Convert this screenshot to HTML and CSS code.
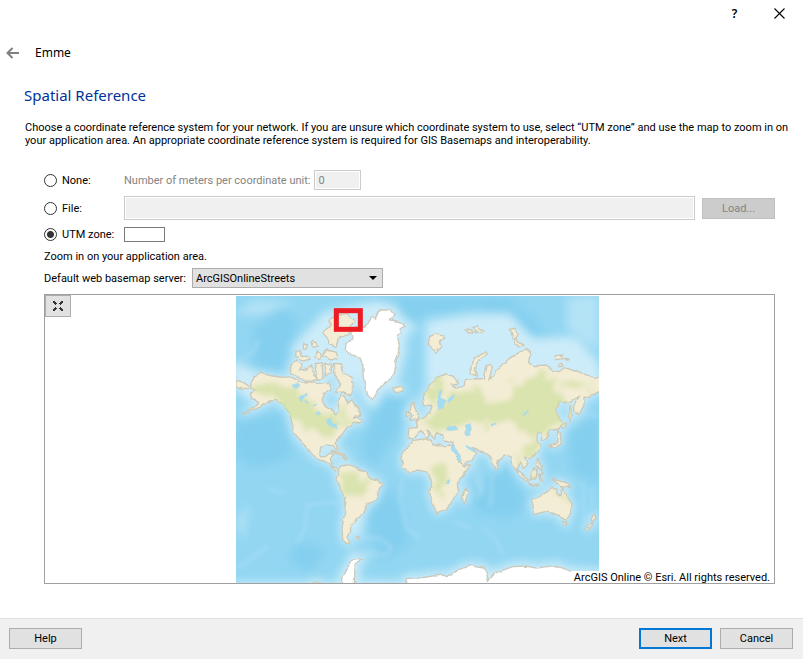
FILE: index.html
```html
<!DOCTYPE html>
<html lang="en">
<head>
<meta charset="utf-8">
<title>Emme - Spatial Reference</title>
<link rel="stylesheet" href="styles.css">
</head>
<body>
<header class="titlebar">
  <button class="tool" type="button" aria-label="What's this">?</button>
  <button class="tool" type="button" aria-label="Close"><svg width="11" height="11" viewBox="0 0 11 11"><path d="M.5.5l10 10M10.5.5l-10 10" stroke="#000" stroke-width="1.1" fill="none"/></svg></button>
</header>
<nav class="crumb">
  <button class="back" type="button" aria-label="Back"><svg width="14" height="12" viewBox="0 0 14 12"><path d="M13 6H2M6.500 1L1.500 6l5 5" fill="none" stroke="#808080" stroke-width="2"/></svg></button>
  <span>Emme</span>
</nav>
<main class="page">
  <h1>Spatial Reference</h1>
  <p class="intro">Choose a coordinate reference system for your network. If you are unsure which coordinate system to use, select “UTM zone” and use the map to zoom in on your application area. An appropriate coordinate reference system is required for GIS Basemaps and interoperability.</p>
  <form class="form">
    <div class="row row-none">
      <label class="choice"><input type="radio" name="crs">None:</label>
      <label class="muted" for="meters">Number of meters per coordinate unit:</label>
      <input class="field off meters" id="meters" type="text" value="0" disabled>
    </div>
    <div class="row row-file">
      <label class="choice"><input type="radio" name="crs">File:</label>
      <input class="field off file" type="text" aria-label="File" disabled>
      <button class="btn" type="button" disabled>Load...</button>
    </div>
    <div class="row row-utm">
      <label class="choice"><input type="radio" name="crs" checked>UTM zone:</label>
      <input class="field zone" type="text" aria-label="UTM zone">
    </div>
    <p class="hint">Zoom in on your application area.</p>
    <div class="row row-server">
      <label for="server">Default web basemap server:</label>
      <div class="picker">
        <select id="server"><option>ArcGISOnlineStreets</option></select>
        <svg class="arrow" width="8" height="4" viewBox="0 0 8 4"><path d="M0 0h8L4 4z"/></svg>
      </div>
    </div>
    <div class="map">
      <svg class="world" width="363" height="287" viewBox="0 3 1089 861" role="img" aria-label="World map">
        <defs>
          <filter id="soft" x="-20%" y="-20%" width="140%" height="140%"><feGaussianBlur stdDeviation="14"/></filter>
          <filter id="haze" x="-20%" y="-20%" width="140%" height="140%"><feGaussianBlur stdDeviation="6"/></filter>
          <filter id="growth" x="-20%" y="-20%" width="140%" height="140%"><feTurbulence type="fractalNoise" baseFrequency=".03" numOctaves="3" seed="9"/><feDisplacementMap in="SourceGraphic" scale="70" xChannelSelector="R" yChannelSelector="G"/><feGaussianBlur stdDeviation="8"/></filter>
          <filter id="coast" x="-5%" y="-5%" width="110%" height="110%"><feTurbulence type="fractalNoise" baseFrequency=".045" numOctaves="2" seed="4"/><feDisplacementMap in="SourceGraphic" scale="12" xChannelSelector="R" yChannelSelector="G"/><feGaussianBlur stdDeviation="1.500"/></filter>
          <g id="land">
            <path d="M45 265L55 242 75 235 110 243 140 247 165 245 190 262 215 260 245 266 275 262 285 285 266 295 258 315 266 332 285 340 298 357 307 352 308 330 312 300 325 304 335 325 345 317 360 335 375 355 372 365 352 368 380 376 370 387 352 382 335 395 320 415 304 435 297 446 307 464 298 462 290 452 270 450 254 460 250 476 258 486 270 484 280 475 292 478 283 492 290 512 308 522 297 526 280 507 262 497 240 490 225 473 210 455 195 440 185 430 172 405 168 380 160 352 140 330 120 316 100 318 75 335 40 350 15 360 60 333 68 325 48 313 43 295 60 285 44 280Z"/>
            <path d="M308 519L324 508 350 512 365 525 385 530 400 548 425 555 438 568 430 590 418 615 395 627 385 650 370 667 358 678 346 690 343 710 335 730 342 744 330 745 320 730 318 700 325 660 330 610 315 585 302 560 307 540Z"/>
            <path d="M515 452L530 437 560 432 584 432 590 446 618 453 645 450 655 470 668 495 682 513 703 510 682 540 664 565 667 590 650 607 645 625 625 645 602 654 590 625 581 592 587 562 574 532 546 525 520 532 500 515 495 488Z"/>
            <path d="M519 400L544 397 540 378 560 365 582 352 588 330 565 332 562 305 580 275 602 247 630 237 655 245 668 257 664 270 648 267 662 282 685 272 686 257 725 252 745 250 753 212 765 207 765 232 759 253 778 237 786 220 805 205 820 190 850 172 870 160 885 180 880 205 895 212 932 210 945 226 970 230 985 218 1010 225 1040 235 1060 245 1100 248 1100 284 1070 300 1060 308 1044 306 1044 330 1030 362 1017 350 1015 330 1030 305 1000 320 970 322 958 345 968 366 980 385 965 402 940 405 932 430 920 435 920 414 905 412 902 435 912 452 905 475 885 488 866 486 874 510 863 520 850 505 844 520 860 545 853 542 833 515 825 485 808 480 787 497 783 520 776 522 764 485 746 472 722 465 700 458 722 474 710 492 680 510 670 496 655 464 650 442 620 434 620 419 600 414 596 432 584 418 572 404 580 423 570 430 556 407 541 420 530 432 516 430Z"/>
            <path d="M888 615L920 600 935 588 950 580 962 583 963 596 975 602 980 578 993 606 1008 625 1005 655 994 672 975 668 955 655 925 650 895 658Z M982 680l12 0-5 12z"/>
            <path d="M680 605L690 580 696 592 688 620 680 622Z M1073 655l10 14-12 15-6-8z M1064 684l6 6-17 15-5-5z"/>
            <path d="M845 524l15 10 23 30-12-3-20-23z M882 535l15-17 8 6-6 28-15 0z M880 565l28 3-2 5-26-4z M908 538l15-5-11 9 8 17-9-5z M948 553l20 4 25 8 14 14-19-7-14 4-10-12z M905 490l7 16 6 22-8-4-9-16z"/>
            <path d="M965 405l8 15 3 25-18 10-20-1 25-12z M1002 330l6 28-5 26-3-25z M975 390l16-6-2 8-12 7z"/>
            <path d="M527 325l9-6-2 17 12 25-3 11-20 4 8-15-9-12z M512 350l9-4 0 15-10 4z M472 280l15-6 15 3 0 10-17 6-10-3z"/>
            <path d="M578 125l20-10 25 5 3 10-14 6 6 17-16 10-3 12-15-18z M690 105l14-1 7 8-14 2z M711 99l11-9 5 12 14 0-3 9-16 5z M823 103l14-4 7 19-9 12 15 9 14 12-17 4-16-24z M706 236l-1-25 15-24 31-17 4 9-28 19-12 25 8 21z M958 182l22-2 4 11-25 3z M987 188l13 4-4 4z M965 208l12-3 4 8-12 2z"/>
            <path d="M166 205l15-8 14 10-2 18 18-3 16-12 5 30 15 12-25 7-34-10-25-20z M180 169l14-2 4 17 20 0 4 9-20 5-23-12z M203 144l11 2-3 14-9-2z M226 140l13 2 7 12-17 3z M245 170l-8 16 15 5 6-15z M261 110l25-20-8-16 31-16 27-2 20 20-14 22-5 20-29 10-8 26-23-5 2-19-17-13z M270 165l30 6 6 17-20 7-26-11z M240 206l18-3 3 43-18 9-5-25z M268 205l18 6-1 22-17 10z M292 209l21 0 9 25 26 10 4 28-12 30-17-11-25 1 16-25-20-25z"/>
            <path d="M286 466l22 6 20 7-3 4-38-12z M319 487l14 1-3 6z M362 725l8 1-2 6z"/>
            <path d="M0 257l18 2 22 15-5 9-17 0-18-7z"/>
          </g>
          <path id="greenland" d="M382 97L400 82 408 65 418 70 430 45 463 45 475 60 462 75 482 78 508 95 492 102 496 115 482 120 488 140 491 170 480 200 475 235 460 255 440 270 425 285 415 305 408 315 395 300 386 270 381 240 381 210 370 185 345 180 328 165 330 145 350 135 344 112 360 95Z"/>
          <path id="ice" d="M-5 890V874H220L230 864 250 864 262 874H316L318 845 337 817 350 793 375 790 357 812 355 870H510L515 850 546 850 590 843 645 840 668 824 705 812 746 820 758 857 777 834 830 815 870 813 900 819 960 812 1005 829 1100 835V890Z"/>
          <mask id="landmask" maskUnits="userSpaceOnUse" x="0" y="0" width="1100" height="880"><use href="#land" fill="#fff"/></mask>
        </defs>
        <rect width="1092" height="866" fill="#92d6f2"/>
        <g filter="url(#soft)">
          <path fill="#84cfef" d="M50 100l90-70 45 55-50 150-80-15z M-10 380l145-25 35 130-115 35-60-40z M400 5l420 0 70 65 70 80-80-20-150-90-160 15-80 80z M430 310l80-10-10 90-90 130-35-65z M440 550l60 80 20 115-75 55-55-120z M700 560l120-50 50 110-40 50-110-15z M1000 410l90-50v210l-85-45z M180 740l90 25-50 65-60-30z"/>
          <path fill="#b4e3f6" d="M-10 60l60-45 130 5-100 40z M960 5l35 0-5 95 100 70V0z M0 680l40-60-20 120z M700 440l40 130-10 30z"/>
        </g>
        <g filter="url(#soft)" fill="#cdecf9" stroke="#cdecf9">
          <use href="#land" stroke-width="14"/><use href="#greenland" stroke-width="40"/><use href="#ice" stroke-width="26"/>
          <path d="M570 80l120-20 130-5 70 75 130-5 70 80v60H570z M-10 195l80 40-20 90-60-45z M165 160l100-110 170-35 70 70-90 170-210-30z M1010 315l35-5-70 110z M345 680l45-10-25 65z M350 760l-20 60 50 20z"/>
        </g>
        <g filter="url(#haze)" fill="none" stroke="#b0e0f5" stroke-width="5">
          <path d="M5 820l90-67 M180 745l28-45 5-70 120-12 M15 190l40-20 14-35 M95 580l50 15 M350 725l80 5 35 25-10 25-70-5 M500 550l-8 60 20 90 40 30 M770 540l-7 95 M725 555l12 30-15 25 M740 700l45 40 15 40 M650 680l60 20 M1040 560l5 100-5 40 M1065 580l5 50 M1045 350l40 15 M590 560l-20 50"/>
        </g>
        <g filter="url(#coast)">
          <g stroke="#cbc9b9" stroke-width="4" fill="#f3edd6"><use href="#land"/></g>
          <g stroke="#cbcabf" stroke-width="4" fill="#fff"><use href="#greenland"/><use href="#ice"/></g>
        </g>
        <g mask="url(#landmask)"><g filter="url(#growth)" fill="#d3e1a4" opacity=".8">
          <path d="M75 255l45 15 60 25 50 30 50 40 65 5 25 10-60 10-20 40-55-25-45-25-40-10-25-55-60-30z M310 330l30 10-10 25z M320 530l50 5 25 30-35 50-30-15-15-30z M580 530l40-12 20 30-20 45-25-20z M565 300l25-40 30-10 10 20-20 55-30-5z M545 370l60-15 25-45 45-25 60-10 30 40 50 5 20-50 50-15 50-25 25 60 60 40-25 55-30 5-40 25-60-5-20-25-70 0-90 5-80 20z M980 260l70 0 30 20-60 10z M865 440l40-25 5 45-35 30-20-10z M825 480l25 10 5 20-20-15z M880 530l20 5-5 20z M945 590l60 20-3 20z"/>
        </g></g>
        <g filter="url(#coast)" fill="#a5dcf0" stroke="#b8d9dc">
          <path d="M168 270l18-5 4 12-15 7z M188 307l23-10 6 4-24 17z M208 318l12 2-3 8z M228 335l12-10 2 5z M239 354l13-5 3 10-12 5z M270 378l14-6 8 14 14 3-5 14-26-13z M632 315l20-15 7 4-10 11-15 5z M604 332l5-43 9-8-4 25 15 12-7 20-12 7z M635 395l22-3 10 11-23 4-14-2z M687 390l17-5 2 18-3 20-15-1 3-16z M767 384l14 1-1 5-12-1z M860 360l16-17 3 4-15 16z M647 452l10 2 20 42-7 3-24-35z M690 450l26 15-5 5-22-15z M631 555l9-2 0 11-8 0z"/>
        </g>
        <rect x="301" y="47" width="72" height="56" fill="none" stroke="#ed1c24" stroke-width="15"/>
      </svg>
      <button class="extent" type="button" aria-label="Full extent"><svg width="10" height="10" viewBox="0 0 10 10"><path d="M0 0h2v1h1v1h1v1h-1v1h-1v-1h-1v-1h-1z M10 0h-2v1h-1v1h-1v1h1v1h1v-1h1v-1h1z M0 10h2v-1h1v-1h1v-1h-1v-1h-1v1h-1v1h-1z M10 10h-2v-1h-1v-1h-1v-1h1v-1h1v1h1v1h1z" fill="#333"/></svg></button>
      <span class="credit">ArcGIS Online © Esri. All rights reserved.</span>
    </div>
  </form>
</main>
<footer class="footer">
  <button class="btn help" type="button">Help</button>
  <button class="btn next" type="button">Next</button>
  <button class="btn" type="button">Cancel</button>
</footer>
</body>
</html>
```
FILE: styles.css
```css
* { box-sizing: border-box; }
body {
  margin: 0;
  min-height: 100vh;
  display: flex;
  flex-direction: column;
  background: #fff;
  color: #000;
  font: 11px/13px Roboto, sans-serif;
}
button, input, select { font: inherit; color: inherit; margin: 0; }
.titlebar { display: flex; justify-content: flex-end; height: 26px; padding-right: 1px; }
.tool {
  width: 45px; border: 0; padding: 0; background: none;
  display: grid; place-items: center;
  font: 600 12px/13px "Noto Sans", sans-serif;
}
.crumb { display: flex; align-items: center; gap: 15px; height: 53px; padding-left: 6px; font: 12px/18px "Noto Sans", sans-serif; }
.back { border: 0; padding: 0; background: none; display: flex; }
.page { flex: 1; display: flex; flex-direction: column; padding: 6px 8px 34px 24px; }
h1 { margin: 0; font: 400 15px/20px "Noto Sans", sans-serif; color: #003399; }
.intro { margin: 16px 0 0 1px; }
.form { flex: 1; display: flex; flex-direction: column; margin: 23px 20px 0 20px; }
.row { display: flex; align-items: center; }
.row-none { height: 20px; }
.row-file { height: 24px; margin-top: 6px; }
.row-file .btn { margin-left: 7px; }
.row-utm { height: 15px; margin-top: 7px; }
.choice { width: 80px; flex: none; display: flex; align-items: center; gap: 5px; white-space: nowrap; }
.choice input {
  appearance: none; width: 13px; height: 13px; flex: none;
  border: 1px solid #333; border-radius: 50%; background: #fff;
}
.choice input:checked { background: radial-gradient(circle, #333 0 3px, #fff 4px); }
.muted { color: #838383; margin-right: 4px; }
.field { border: 1px solid #7a7a7a; border-radius: 0; background: #fff; padding: 0 3px; }
.off { border-color: #ccc; background: #f0f0f0; box-shadow: inset 0 0 0 1px #fff; color: #838383; }
.meters { width: 47px; height: 20px; }
.file { flex: 1; height: 24px; min-width: 0; }
.zone { width: 41px; height: 15px; }
.hint { margin: 8px 0 0; }
.row-server { margin-top: 5px; height: 20px; gap: 6px; }
.picker { position: relative; display: flex; }
select {
  appearance: none; width: 191px; height: 20px; padding: 0 20px 0 3px;
  border: 1px solid #adadad; border-radius: 0; background: #e1e1e1;
}
.arrow { position: absolute; right: 6px; top: 8px; pointer-events: none; }
.map {
  position: relative; flex: 1; min-height: 290px; margin-top: 6px;
  border: 1px solid #a0a0a0; display: flex; justify-content: center; align-items: flex-end;
  overflow: hidden;
}
.world { display: block; flex: none; margin-left: 16px; }
.extent {
  position: absolute; left: 0; top: 0; width: 26px; height: 22px; padding: 0;
  border: 1px solid #adadad; background: #e1e1e1; display: grid; place-items: center;
}
.credit { position: absolute; right: 0; bottom: 0; height: 12px; padding: 0 4px 0 3px; background: #fff; white-space: nowrap; }
.btn { width: 73px; height: 21px; padding: 0; flex: none; border: 1px solid #adadad; border-radius: 0; background: #e1e1e1; }
.btn:disabled { border-color: #bfbfbf; background: #ccc; color: #838383; }
.footer { display: flex; gap: 8px; height: 41px; padding: 9px 10px 0 9px; border-top: 1px solid #dfdfdf; background: #f0f0f0; }
.help { margin-right: auto; }
.next { border: 2px solid #0078d7; }
```
